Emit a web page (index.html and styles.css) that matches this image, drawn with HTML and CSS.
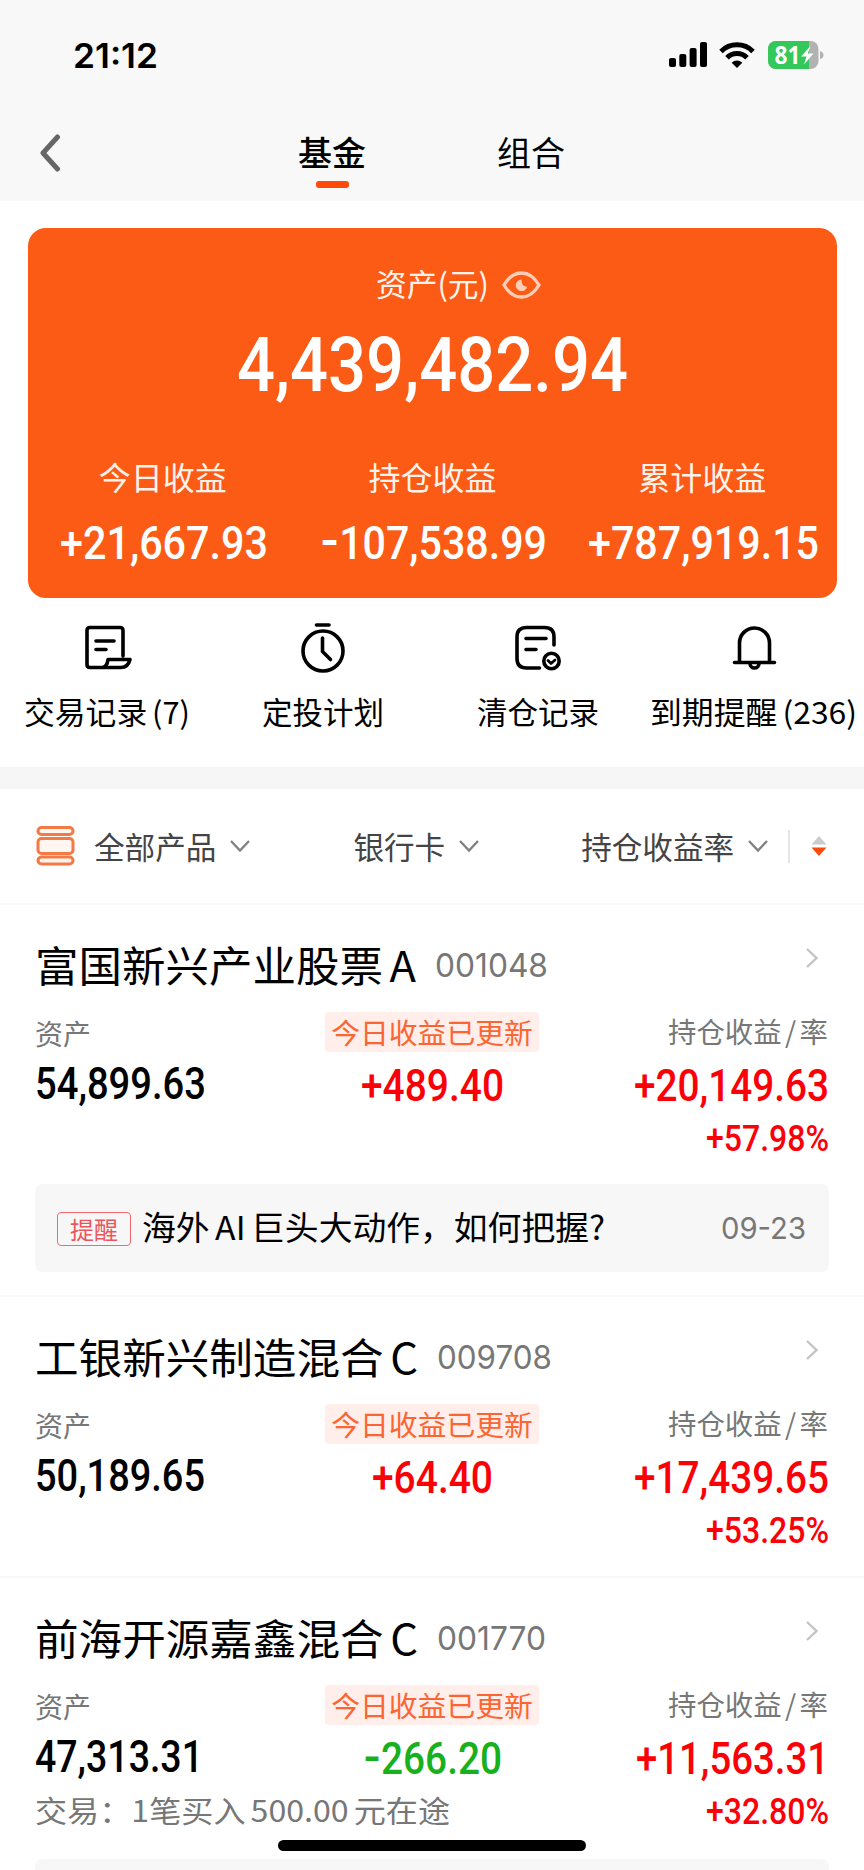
FILE: index.html
```html
<!DOCTYPE html>
<html lang="zh-CN">
<head>
<meta charset="utf-8">
<title>基金</title>
<link rel="stylesheet" href="styles.css">
</head>
<body>
<div class="screen">
  <header class="top">
    <div class="status">
      <svg class="fit clock" width="83" height="25"><text x="-1" y="25" textLength="85" lengthAdjust="spacingAndGlyphs">21:12</text></svg>
      <div class="status-icons">
        <svg width="39" height="26" viewBox="0 0 39 26"><rect x="0" y="16" width="7" height="9" rx="2"/><rect x="10.300" y="12" width="7" height="13" rx="2"/><rect x="20.600" y="6" width="7" height="19" rx="2"/><rect x="31" y="0" width="7" height="25" rx="2"/></svg>
        <svg width="36" height="26" viewBox="0 0 36 26" fill="none" stroke="#000" stroke-width="5"><path d="M2 9.500a22.500 22.500 0 0 1 32 0"/><path d="M8 15.800a14 14 0 0 1 20 0"/><path d="M18 26l-5.300-5.300a7.500 7.500 0 0 1 10.600 0z" fill="#000" stroke="none"/></svg>
        <svg class="fit battery" width="56" height="28" viewBox="0 0 56 28"><defs><clipPath id="bt"><rect width="50.500" height="28" rx="8"/></clipPath></defs><g clip-path="url(#bt)"><rect width="51" height="28" fill="#b2b2b2"/><rect width="41" height="28" fill="#34c759"/></g><path d="M52 10q3.500 1 3.500 4t-3.500 4z" fill="#b2b2b2"/><text x="6.500" y="22.500" textLength="26" lengthAdjust="spacingAndGlyphs">81</text><path d="M42.500 5L33 15.500h5.500L36 23.500l9.500-11h-5.800z" fill="#fff"/></svg>
      </div>
    </div>
    <nav class="tabs">
      <svg class="back" width="22" height="40" viewBox="0 0 22 40"><path d="M18.500 4L4 20l14.500 16"/></svg>
      <div class="tab active">基金</div>
      <div class="tab">组合</div>
    </nav>
  </header>

  <section class="card">
    <div class="card-title"><svg class="fit cap" width="113" height="30"><text y="26" textLength="113" lengthAdjust="spacingAndGlyphs">资产(元)</text></svg>
      <svg class="eye" width="39" height="28" viewBox="0 0 39 28"><path d="M2 14Q9 2 19.500 2T37 14Q30 26 19.500 26T2 14z" fill="none" stroke="#ffcdb8" stroke-width="3.400"/><path d="M19.500 8.500a5.800 5.800 0 1 0 5.600 7.300q-5.600 0-5.600-7.300z" fill="#ffcdb8"/></svg>
    </div>
    <svg class="fit total" width="388" height="54"><text x="-2" y="54" textLength="391" lengthAdjust="spacingAndGlyphs">4,439,482.94</text></svg>
    <div class="stats">
      <div class="stat"><span>今日收益</span><svg class="fit sum" width="206" height="34"><text y="34" textLength="208" lengthAdjust="spacingAndGlyphs">+21,667.93</text></svg></div>
      <div class="stat"><span>持仓收益</span><svg class="fit sum" width="223" height="34"><text x="-1" y="34" textLength="227" lengthAdjust="spacingAndGlyphs"><tspan class="minus" dy="-2">-</tspan><tspan dy="2">107,538.99</tspan></text></svg></div>
      <div class="stat"><span>累计收益</span><svg class="fit sum" width="229" height="34"><text y="34" textLength="231" lengthAdjust="spacingAndGlyphs">+787,919.15</text></svg></div>
    </div>
  </section>

  <section class="actions">
    <div class="action">
      <svg class="paper" width="50" height="56" viewBox="0 0 50 56"><path d="M39 36V10.500q0-3-3-3H6q-3 0-3 3v34q0 3 3 3h31q7 0 9-8H24q-1 8-6 8"/><path d="M12 21h18M12 29.500h10"/></svg>
      <svg class="fit lbl" width="164" height="32"><text x="-2" y="27" textLength="166" lengthAdjust="spacingAndGlyphs">交易记录 (7)</text></svg>
    </div>
    <div class="action">
      <svg width="50" height="56" viewBox="0 0 50 56"><circle cx="25" cy="31" r="20"/><path d="M18.500 5h12.500M24.500 18v13.500l8 8"/></svg>
      <svg class="fit lbl" width="122" height="32"><text y="27" textLength="122" lengthAdjust="spacingAndGlyphs">定投计划</text></svg>
    </div>
    <div class="action">
      <svg width="50" height="56" viewBox="0 0 50 56"><path d="M40 25v-8q0-9.500-9.500-9.500h-18Q3 7.500 3 17v21.500Q3 48 12.500 48h13"/><path d="M12 18.500h20M12 29.500h10"/><circle cx="37.500" cy="41" r="7.700"/><path class="thin" d="M34 40.500l3 3 4-3.500"/></svg>
      <svg class="fit lbl" width="122" height="32"><text x="-1" y="27" textLength="122" lengthAdjust="spacingAndGlyphs">清仓记录</text></svg>
    </div>
    <div class="action">
      <svg width="50" height="56" viewBox="0 0 50 56"><path d="M10.500 42V23a15 15 0 0 1 30 0v19M5.500 42.500h40"/><path d="M21 43.500a4.500 4.500 0 0 0 9 0"/></svg>
      <svg class="fit lbl" width="206" height="32"><text x="-1" y="27" textLength="207" lengthAdjust="spacingAndGlyphs">到期提醒 (236)</text></svg>
    </div>
  </section>

  <section class="filters">
    <svg class="stack" width="40" height="40" viewBox="0 0 40 40"><rect x="2" y="1.500" width="35" height="7" rx="3.500"/><rect x="2" y="12.500" width="35" height="15" rx="3.500"/><rect x="2" y="31" width="35" height="7" rx="3.500"/></svg>
    <span class="filter all">全部产品<svg class="down" width="22" height="14" viewBox="0 0 22 14"><path d="M2 2l9 9.500L20 2"/></svg></span>
    <span class="filter bank">银行卡<svg class="down" width="22" height="14" viewBox="0 0 22 14"><path d="M2 2l9 9.500L20 2"/></svg></span>
    <span class="filter rate">持仓收益率<svg class="down" width="22" height="14" viewBox="0 0 22 14"><path d="M2 2l9 9.500L20 2"/></svg></span>
    <i class="bar"></i>
    <svg class="sort" width="16" height="20" viewBox="0 0 16 20"><path d="M8 0l7.500 8.500H.500z" fill="#ccc"/><path d="M8 20l7.500-8.500H.500z" fill="#ff4a0a"/></svg>
  </section>

  <article class="fund">
    <div class="name">
      <svg class="fit title" width="379" height="42"><text x="-1" y="37" textLength="381" lengthAdjust="spacingAndGlyphs">富国新兴产业股票 A</text></svg>
      <svg class="fit code" width="111" height="24"><text x="-1" y="24" textLength="113" lengthAdjust="spacingAndGlyphs">001048</text></svg>
      <svg class="go" width="14" height="22" viewBox="0 0 14 22"><path d="M2 2l9.500 9L2 20"/></svg>
    </div>
    <div class="cols">
      <div class="col left"><span class="label">资产</span><svg class="fit val" width="168" height="31"><text x="-1" y="31" textLength="171" lengthAdjust="spacingAndGlyphs">54,899.63</text></svg></div>
      <div class="col mid"><span class="tag">今日收益已更新</span><svg class="fit val red" width="141" height="31"><text x="-1" y="31" textLength="143" lengthAdjust="spacingAndGlyphs">+489.40</text></svg></div>
      <div class="col right"><svg class="fit label-r" width="159" height="40"><text y="31" textLength="160" lengthAdjust="spacingAndGlyphs">持仓收益 / 率</text></svg><svg class="fit val red" width="193" height="31"><text y="31" textLength="195" lengthAdjust="spacingAndGlyphs">+20,149.63</text></svg><svg class="fit pct red" width="121" height="27"><text y="27" textLength="123" lengthAdjust="spacingAndGlyphs">+57.98%</text></svg></div>
    </div>
    <div class="notice">
      <span class="badge">提醒</span>
      <svg class="fit news" width="462" height="34"><text x="-1" y="29" textLength="463" lengthAdjust="spacingAndGlyphs">海外 AI 巨头大动作，如何把握?</text></svg>
      <svg class="fit date" width="84" height="22"><text y="22" textLength="85" lengthAdjust="spacingAndGlyphs">09-23</text></svg>
    </div>
  </article>

  <article class="fund">
    <div class="name">
      <svg class="fit title" width="381" height="42"><text x="-1" y="37" textLength="383" lengthAdjust="spacingAndGlyphs">工银新兴制造混合 C</text></svg>
      <svg class="fit code" width="113" height="24"><text x="-1" y="24" textLength="115" lengthAdjust="spacingAndGlyphs">009708</text></svg>
      <svg class="go" width="14" height="22" viewBox="0 0 14 22"><path d="M2 2l9.500 9L2 20"/></svg>
    </div>
    <div class="cols">
      <div class="col left"><span class="label">资产</span><svg class="fit val" width="168" height="31"><text x="-1" y="31" textLength="170" lengthAdjust="spacingAndGlyphs">50,189.65</text></svg></div>
      <div class="col mid"><span class="tag">今日收益已更新</span><svg class="fit val red" width="119" height="31"><text x="-1" y="31" textLength="121" lengthAdjust="spacingAndGlyphs">+64.40</text></svg></div>
      <div class="col right"><svg class="fit label-r" width="159" height="40"><text y="31" textLength="160" lengthAdjust="spacingAndGlyphs">持仓收益 / 率</text></svg><svg class="fit val red" width="193" height="31"><text y="31" textLength="195" lengthAdjust="spacingAndGlyphs">+17,439.65</text></svg><svg class="fit pct red" width="121" height="27"><text y="27" textLength="123" lengthAdjust="spacingAndGlyphs">+53.25%</text></svg></div>
    </div>
  </article>

  <article class="fund">
    <div class="name">
      <svg class="fit title" width="381" height="42"><text x="-1" y="37" textLength="383" lengthAdjust="spacingAndGlyphs">前海开源嘉鑫混合 C</text></svg>
      <svg class="fit code" width="107" height="24"><text x="-1" y="24" textLength="109" lengthAdjust="spacingAndGlyphs">001770</text></svg>
      <svg class="go" width="14" height="22" viewBox="0 0 14 22"><path d="M2 2l9.500 9L2 20"/></svg>
    </div>
    <div class="cols">
      <div class="col left"><span class="label">资产</span><svg class="fit val" width="163" height="31"><text x="-1" y="31" textLength="168" lengthAdjust="spacingAndGlyphs">47,313.31</text></svg><svg class="fit trade" width="414" height="31"><text x="-1" y="27" textLength="415" lengthAdjust="spacingAndGlyphs">交易：1笔买入 500.00 元在途</text></svg></div>
      <div class="col mid"><span class="tag">今日收益已更新</span><svg class="fit val green" width="135" height="31"><text x="-2" y="31" textLength="139" lengthAdjust="spacingAndGlyphs"><tspan class="minus" dy="-2">-</tspan><tspan dy="2">266.20</tspan></text></svg></div>
      <div class="col right"><svg class="fit label-r" width="159" height="40"><text y="31" textLength="160" lengthAdjust="spacingAndGlyphs">持仓收益 / 率</text></svg><svg class="fit val red" width="191" height="31"><text y="31" textLength="193" lengthAdjust="spacingAndGlyphs">+11,563.31</text></svg><svg class="fit pct red" width="121" height="27"><text y="27" textLength="123" lengthAdjust="spacingAndGlyphs">+32.80%</text></svg></div>
    </div>
    <div class="notice last"></div>
  </article>
  <div class="home"></div>
</div>
</body>
</html>
```
FILE: styles.css
```css
* { box-sizing: border-box; }
body { margin: 0; background: #fff; font-family: "Noto Sans CJK SC", sans-serif; color: #000; }
svg { display: block; flex: none; }
.screen { position: relative; width: 864px; height: 1870px; overflow: hidden; }
.fit { overflow: visible; }

.top { height: 201px; background: #f8f8f8; padding-top: 40px; }
.status { display: flex; justify-content: space-between; align-items: center; height: 30px; padding: 0 40px 0 74px; }
.clock { font: 600 34px Inter, sans-serif; }
.status-icons { display: flex; align-items: center; }
.status-icons svg:nth-child(2) { margin: 0 13px 0 11px; }
.battery text { font: 700 25px "Open Sans", sans-serif; fill: #fff; }
.tabs { display: flex; align-items: center; padding: 0 0 0 39px; height: 66px; margin-top: 50px; }
.back { fill: none; stroke: #666; stroke-width: 5px; stroke-linecap: round; stroke-linejoin: round; }
.tab { width: 68px; margin-left: 131px; font-size: 34px; line-height: 64px; height: 66px; white-space: nowrap; }
.tab.active { margin-left: 237px; font-weight: 500; display: flex; flex-direction: column; align-items: center; }
.tab.active::after { content: ""; flex: none; width: 33px; height: 7px; margin-top: -3px; border-radius: 3px; background: #ff4a0a; }

.card { margin: 27px 27px 0 28px; height: 370px; border-radius: 18px; background: #fb5b15; color: #fff3ec; fill: #fff; display: flex; flex-direction: column; align-items: center; }
.card-title { display: flex; align-items: center; gap: 13px; height: 30px; margin-top: 42px; padding-left: 52px; }
.cap { font-size: 31px; fill: #fff3ec; }
.total { margin-top: 37px; font: 500 76px Roboto, sans-serif; }
.stats { display: grid; grid-template-columns: repeat(3, 1fr); width: 100%; margin-top: 61px; }
.stat { display: flex; flex-direction: column; align-items: center; font-size: 32px; line-height: 48px; }
.sum { margin-top: 25px; font: 500 47px Roboto, sans-serif; }
.minus { font-family: Inter, sans-serif; font-weight: 600; }

.actions { display: grid; grid-template-columns: repeat(4, 215.500px); height: 169px; padding-top: 22px; }
.action { display: flex; flex-direction: column; align-items: center; gap: 21px; }
.action > svg:first-child { fill: none; stroke: #000; stroke-width: 3.600px; stroke-linecap: round; stroke-linejoin: round; }
.action .paper { margin-left: 3px; }
.action .thin { stroke-width: 2.800px; }
.lbl { font-size: 30.500px; word-spacing: -2px; }

.filters { display: flex; align-items: center; height: 136px; padding-left: 36px; border-top: 22px solid #f6f6f6; color: #444; }
.stack { fill: #fff6f2; stroke: #f37a45; stroke-width: 3px; }
.filter { display: flex; align-items: center; gap: 13px; font-size: 30.600px; line-height: 46px; white-space: nowrap; }
.all { margin-left: 18px; }
.bank { margin-left: 102px; }
.rate { margin-left: 101px; }
.filter { margin-top: -1px; }
.down { fill: none; stroke: #808080; stroke-width: 2.300px; }
.bar { width: 2px; height: 33px; margin-left: 19px; background: #e5e5e5; }
.sort { margin-left: 21px; }

.fund { border-top: 2px solid #f8f8f8; padding: 30px 36px 0; }
.name { display: flex; align-items: center; height: 62px; }
.title { font-size: 42.500px; word-spacing: -3px; }
.code { margin-left: 21px; margin-top: -2px; font: 400 32.500px Inter, sans-serif; fill: #777; }
.go { margin: -16px 9px 0 auto; fill: none; stroke: #c4c4c4; stroke-width: 2.400px; }
.cols { display: grid; grid-template-columns: 1fr 214px 1fr; margin-top: 15px; padding-bottom: 34px; }
.col { display: flex; flex-direction: column; width: 0; min-width: 100%; }
.mid { align-items: center; }
.right { align-items: flex-end; padding-right: 1px; }
.label { font-size: 28px; line-height: 42px; height: 40px; color: #777; margin-left: -1px; }
.tag { width: 214px; height: 40px; border-radius: 4px; background: #ffeee9; color: #fb6533; font-size: 28.800px; line-height: 40px; text-align: center; white-space: nowrap; }
.label-r { font-size: 28.500px; fill: #777; word-spacing: -3px; }
.val { font: 500 43.500px Roboto, sans-serif; margin-top: 16px; }
.mid .val { margin-top: 18px; }
.right .val { margin-top: 18px; }
.pct { margin-top: 23px; font: 500 37.500px Roboto, sans-serif; margin-bottom: -1px; }
.red { fill: #fb0006; }
.green { fill: #18b01c; }
.trade { margin-top: 23px; font-size: 30px; fill: #777; word-spacing: -2px; }
.notice { display: flex; align-items: center; height: 88px; margin: 0 -1px 23px; padding: 0 24px 0 22px; border-radius: 8px; background: #f7f7f7; }
.notice.last { margin-top: -1px; }
.badge { width: 74px; height: 34px; margin-top: 2px; border: 1.500px solid #ee6c70; border-radius: 4px; color: #ea565b; font-size: 24px; line-height: 31px; text-align: center; }
.news { margin-left: 12px; font-size: 33px; word-spacing: -2px; }
.date { margin-left: auto; font: 400 30px Inter, sans-serif; fill: #777; }
.home { position: absolute; left: 278px; top: 1840px; width: 308px; height: 11px; border-radius: 6px; background: #000; }
```
